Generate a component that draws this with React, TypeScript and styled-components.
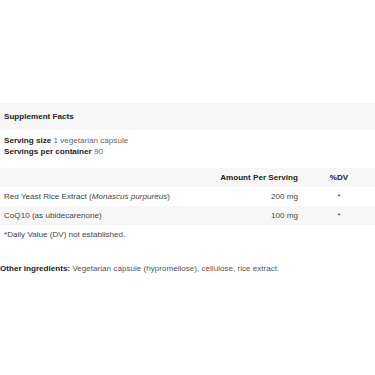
import styled, {createGlobalStyle} from "styled-components";

const GlobalStyle = createGlobalStyle`
    body {
        margin: 0;
        background-color: #fff;
        font-family: "Liberation Sans", Arial, sans-serif;
    }
`;

const Page = styled.div`
    padding-top: 103px;
    font-size: 8.1px;
    color: #333;
`;

const Band = styled.div`
    height: 27px;
    padding: 0 4px;
    display: flex;
    align-items: center;
    background-color: #f7f7f7;
    font-weight: 700;
    color: #222;
`;

const Serving = styled.div`
    padding: 4.5px 4px 11.5px;
    line-height: 11px;
`;

const Label = styled.b`
    font-weight: 700;
    color: #222;
`;

const Value = styled.span`
    color: #666;
`;

const Table = styled.table`
    width: 100%;
    border-collapse: collapse;
    table-layout: fixed;
`;

const Row = styled.tr<{ $shaded?: boolean }>`
    height: 19px;
    background-color: ${(p) => (p.$shaded ? "#f7f7f7" : "#fff")};
`;

const Head = styled.th<{ $align: "left" | "right" | "center"; $width?: number }>`
    padding: 0 ${(p) => (p.$align === "right" ? "5px" : p.$align === "left" ? "4px" : "0")};
    text-align: ${(p) => p.$align};
    width: ${(p) => (p.$width ? `${p.$width}px` : "auto")};
    font-weight: 700;
    color: #222;
`;

const Cell = styled.td<{ $align: "left" | "right" | "center" }>`
    padding: 0 ${(p) => (p.$align === "right" ? "5px" : p.$align === "left" ? "4px" : "0")};
    text-align: ${(p) => p.$align};
    color: #444;
`;

const Note = styled.div`
    padding: 3.5px 4px 0;
    line-height: 11px;
    color: #444;
`;

const Ingredients = styled.p`
    margin: 23px 0 0;
    line-height: 11px;
    color: #555;
`;

const rows = [
    {name: <>Red Yeast Rice Extract (<i>Monascus purpureus</i>)</>, amount: "200 mg", dv: "*"},
    {name: <>CoQ10 (as ubidecarenone)</>, amount: "100 mg", dv: "*"},
];

export default function App() {
    return (
        <>
            <GlobalStyle />
            <Page>
                <Band>Supplement Facts</Band>
                <Serving>
                    <div><Label>Serving size</Label> <Value>1 vegetarian capsule</Value></div>
                    <div><Label>Servings per container</Label> <Value>90</Value></div>
                </Serving>
                <Table>
                    <thead>
                        <Row $shaded>
                            <Head $align="left"></Head>
                            <Head $align="right" $width={100}>Amount Per Serving</Head>
                            <Head $align="center" $width={72}>%DV</Head>
                        </Row>
                    </thead>
                    <tbody>
                        {rows.map((r, i) => (
                            <Row key={i} $shaded={i % 2 === 1}>
                                <Cell $align="left">{r.name}</Cell>
                                <Cell $align="right">{r.amount}</Cell>
                                <Cell $align="center">{r.dv}</Cell>
                            </Row>
                        ))}
                    </tbody>
                </Table>
                <Note>*Daily Value (DV) not established.</Note>
                <Ingredients><Label>Other ingredients:</Label> Vegetarian capsule (hypromellose), cellulose, rice extract.</Ingredients>
            </Page>
        </>
    );
}
